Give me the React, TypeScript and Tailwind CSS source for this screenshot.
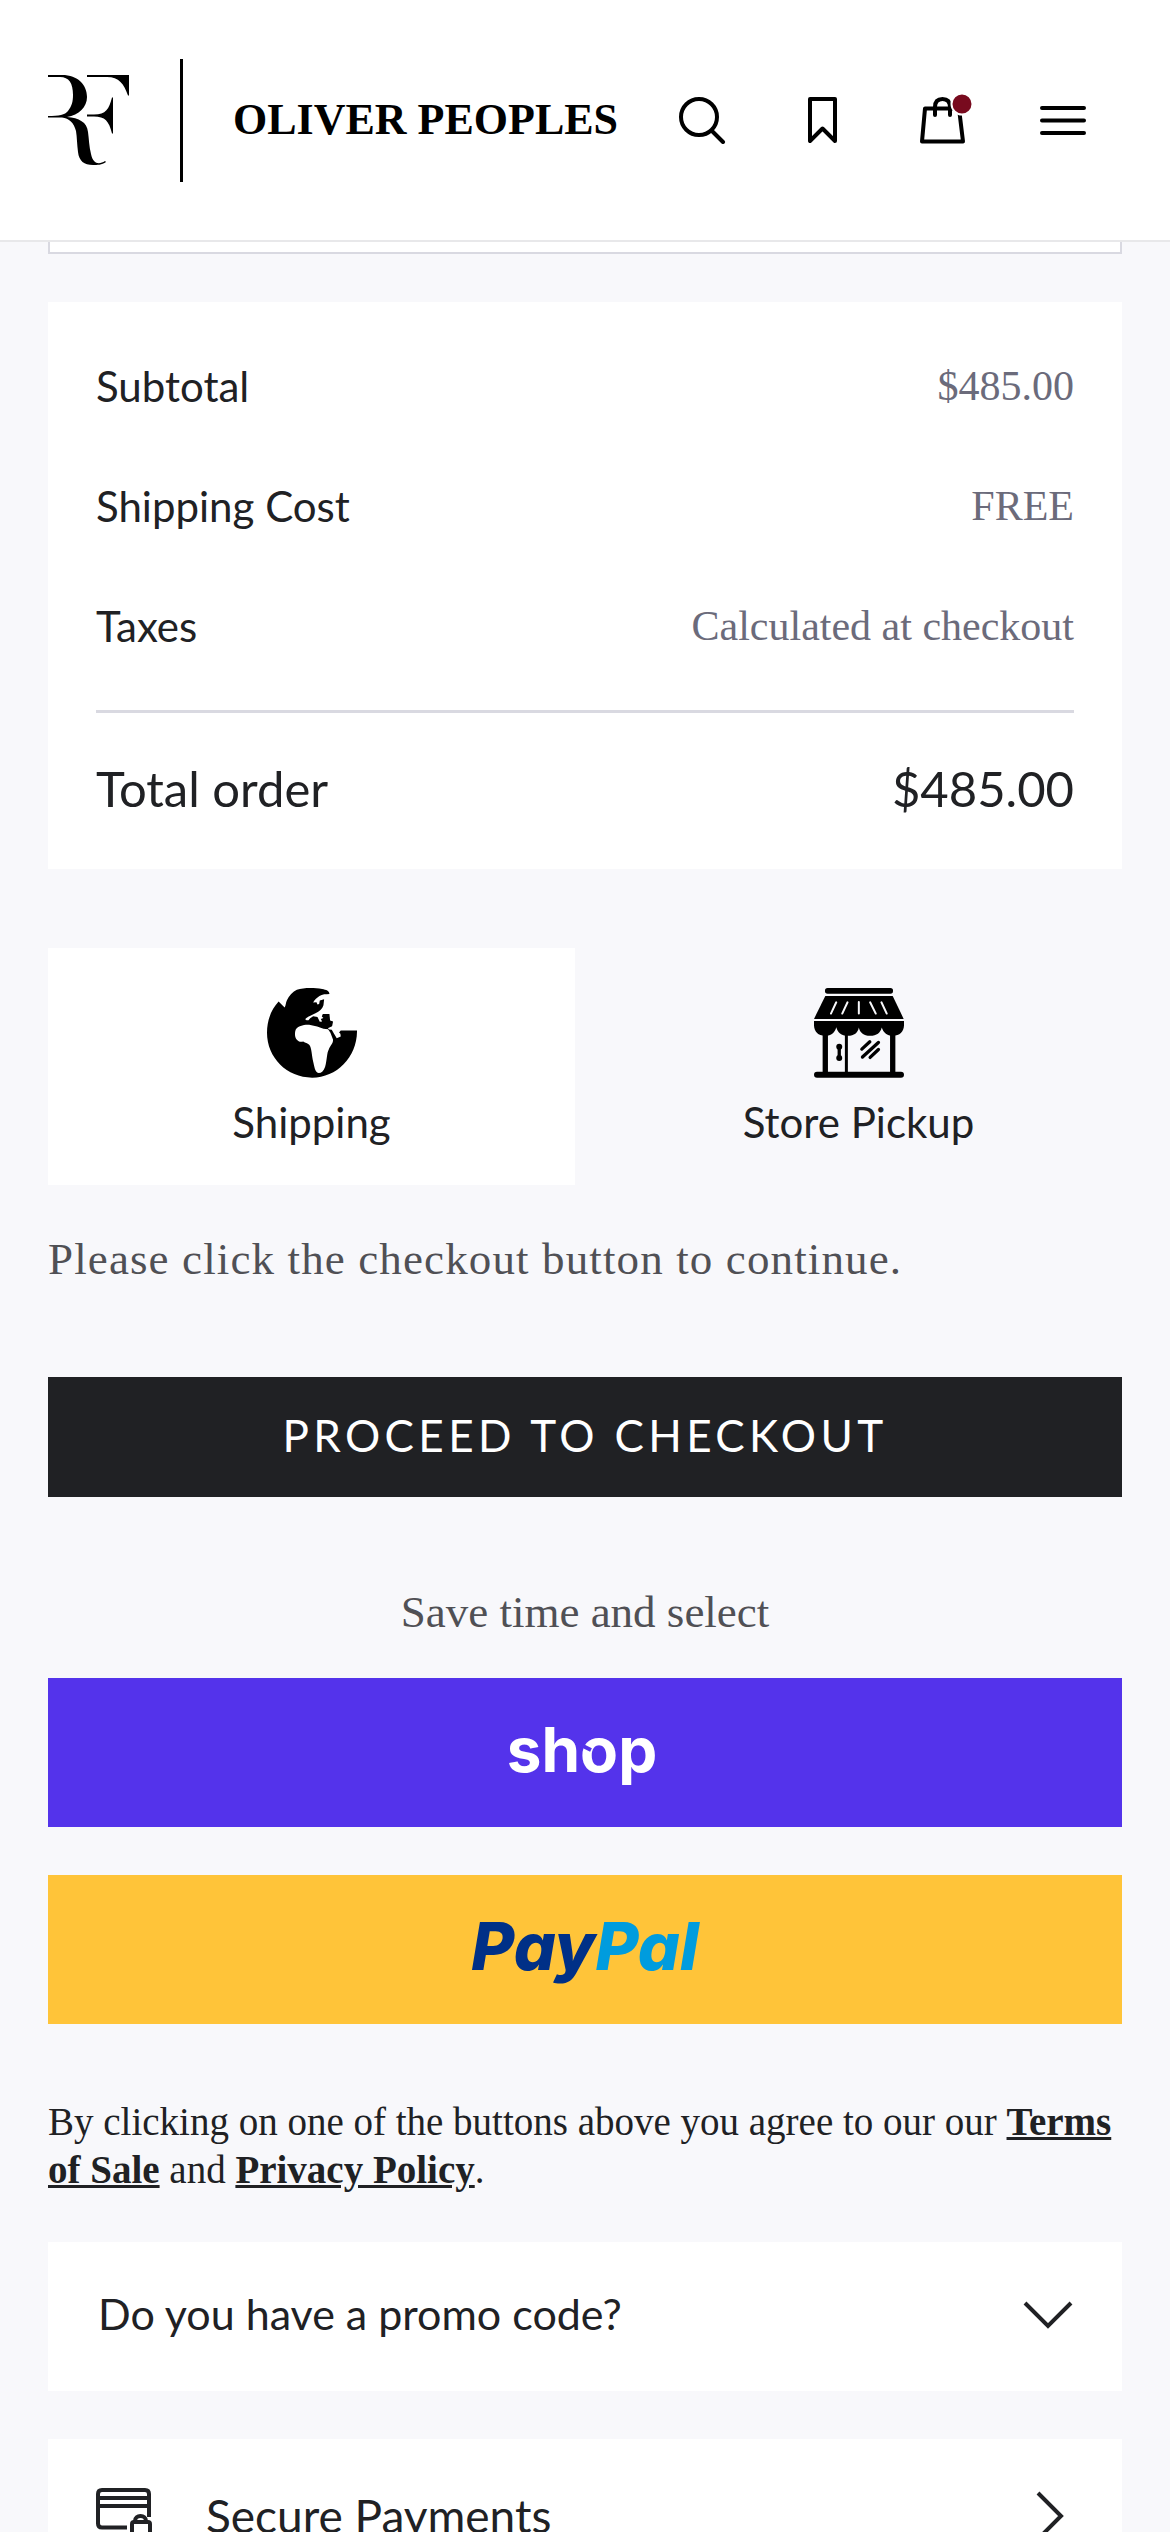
import { useState } from "react";
import type { ReactNode } from "react";

const summary = [
  { label: "Subtotal", value: "$485.00" },
  { label: "Shipping Cost", value: "FREE" },
  { label: "Taxes", value: "Calculated at checkout" },
];

function Monogram() {
  return (
    <svg className="w-[82px] h-[90px]" viewBox="0 0 82 90" aria-hidden="true">
      <path d="M0 0H14C30 0 39 10 39 22C39 32 31 40 19 42C31 43 39 47 40 57C41 64 41 71 43 79C45 89 51 90 57 86L58 87C54 90 49 90 45 90C36 90 31 86 30 77C29 70 29 62 28 56C26 48 21 43 14 42.5H0V41C11 41 17 40 20 36C24 31 25 26 25 20C25 8 21 2 12 2H0Z" />
      <path d="M39 0H81V20.5H80C76 9 71 2 59 2H39Z" />
      <path d="M39 39.5H46C58 39.500 61 34 64 22.500H65V58.500H64C61 46 57 41.500 46 41.500H39Z" />
    </svg>
  );
}

function SearchIcon() {
  return (
    <svg className="size-12" viewBox="0 0 48 48" fill="none" stroke="black" strokeWidth="4" strokeLinecap="round" aria-hidden="true">
      <circle cx="21" cy="21" r="18" />
      <path d="M34 35L45 46" />
    </svg>
  );
}

function BookmarkIcon() {
  return (
    <svg className="size-12" viewBox="0 0 48 48" fill="none" stroke="black" strokeWidth="4" strokeLinejoin="round" aria-hidden="true">
      <path d="M12 3H37V45L24.500 32.500L12 45Z" />
    </svg>
  );
}

function BagIcon() {
  return (
    <svg className="size-12 overflow-visible" viewBox="0 0 48 48" fill="none" stroke="black" strokeWidth="4" strokeLinejoin="round" strokeLinecap="round" aria-hidden="true">
      <path d="M7 12.500H41L45 45.500H4Z" />
      <path d="M17 19V11C17 5.500 20 3 24.500 3C29 3 32 5.500 32 11V19" />
      <circle cx="44" cy="8" r="10.500" fill="#780a1e" stroke="white" strokeWidth="2" />
    </svg>
  );
}

function MenuIcon() {
  return (
    <svg className="size-12" viewBox="0 0 48 48" fill="none" stroke="black" strokeWidth="4" strokeLinecap="round" aria-hidden="true">
      <path d="M4 12H46M4 24.500H46M4 37H46" />
    </svg>
  );
}

function GlobeIcon() {
  return (
    <svg className="size-[90px]" viewBox="80 86 271 271" aria-hidden="true">
      <path d="M115 127L133 145C137 140 136 131 140 123C146 108 158 97 170 91C190 85 222 85 246 89C258 91 268 95 268 104C258 105 246 104 238 110C230 116 222 122 219 130L229 129L232 136L237 134L239 124L252 120L250 138C246 150 238 156 226 162C213 169 201 172 195 180L199 183L205 183L210 177L219 171L232 173L239 188L246 187L242 179L250 176L245 172L248 164L268 164L270 184L279 187L276 201L263 207L268 211L275 212L281 222L290 237L302 232L301 224L297 220L302 214H351C352 293 291 356 216 356C140 356 80 296 80 221C80 180 95 148 115 127Z" />
      <path fill="white" d="M167 210C174 201 190 196 207 197L231 202L250 209L264 210L271 221L279 242C279 254 272 257 266 271C260 281 261 302 255 323C251 335 244 342 236 342C226 341 224 330 220 312C214 288 215 266 207 257C202 251 196 252 189 247C181 250 174 247 170 242C163 234 163 219 167 210Z" />
    </svg>
  );
}

function StoreIcon() {
  return (
    <svg className="size-[90px]" viewBox="71 86 271 271" aria-hidden="true">
      <rect x="104" y="86" width="205" height="17" rx="8" />
      <path d="M105 110H308L341 179H71Z" />
      <path d="M71 185H342V199C341 218 329 230 309 230C290 230 280 220 275 205C271 221 260 230 240 230C220 230 209 220 206 205C203 221 192 230 173 230C153 230 142 219 138 204C134 220 124 230 104 230C84 230 72 218 71 199Z" />
      <path d="M97 225H113V342H97ZM164 225H173V342H164ZM300 225H316V342H300Z" />
      <rect x="71" y="338" width="271" height="18" rx="9" />
      <path d="M138 129L122 163M172 129L156 163M206 128V163M240 129L257 163M274 129L290 163" stroke="#f8f8fb" strokeWidth="6" strokeLinecap="round" />
      <path d="M147 262V297" stroke="black" strokeWidth="10" />
      <circle cx="147" cy="263" r="9" />
      <circle cx="147" cy="297" r="9" />
      <path d="M215 270L239 248M217 294L265 250M240 295L265 271" stroke="black" strokeWidth="10" strokeLinecap="round" />
    </svg>
  );
}

function CardLockIcon() {
  return (
    <svg className="size-14" viewBox="0 0 56 56" fill="none" stroke="#202124" strokeWidth="4" aria-hidden="true">
      <path d="M31 39.500H6C3.500 39.500 2 38 2 35.500V6C2 3.500 3.500 2 6 2H49C51.500 2 53 3.500 53 6V29M2 10H53M2 18H53" />
      <rect x="36" y="34" width="18" height="16" rx="2" />
      <path d="M39 34V33C39 29.500 41.500 28 44.500 28C47.500 28 50 29.500 50 33V34" />
    </svg>
  );
}

function ShopLogo() {
  return (
    <svg className="w-[160px] h-[100px]" viewBox="0 0 160 100" role="img" aria-label="shop">
      <text x="77" y="69" textAnchor="middle" fill="white" className="font-['Inter',sans-serif] font-bold text-[62px]">
        shop
      </text>
      <path d="M72 40L86 47" stroke="#5433eb" strokeWidth="4" />
    </svg>
  );
}

function HeaderButton({ label, children }: { label: string; children: ReactNode }) {
  return (
    <button type="button" aria-label={label} className="w-[120px] h-[120px] flex items-center justify-center">
      {children}
    </button>
  );
}

export default function App() {
  const [method, setMethod] = useState("shipping");

  const tab = "flex-1 h-[237px] flex flex-col items-center pt-10 text-[42px] leading-[60px]";

  return (
    <div className="h-screen overflow-hidden bg-[#f8f8fb] font-['Lato',sans-serif] text-[#202124]">
      <header className="h-[242px] px-12 flex items-center bg-white border-b-2 border-[#e8e8ea]">
        <a href="#" aria-label="Home" className="shrink-0">
          <Monogram />
        </a>
        <div className="w-[3px] h-[123px] bg-black ml-[50px] mr-[50px]" />
        <a href="#" className="font-['Liberation_Serif',serif] font-bold text-[44px] leading-none text-black whitespace-nowrap">
          OLIVER PEOPLES
        </a>
        <nav className="ml-auto flex">
          <HeaderButton label="Search"><SearchIcon /></HeaderButton>
          <HeaderButton label="Wishlist"><BookmarkIcon /></HeaderButton>
          <HeaderButton label="Cart"><BagIcon /></HeaderButton>
          <HeaderButton label="Menu"><MenuIcon /></HeaderButton>
        </nav>
      </header>

      <main className="px-12">
        <div className="h-3 bg-white border-2 border-t-0 border-[#d9d9e1]" />

        <section className="mt-12 px-12 pt-6 bg-white">
          <dl>
            {summary.map(row => (
              <div key={row.label} className="h-[120px] flex items-center justify-between">
                <dt className="text-[42px]">{row.label}</dt>
                <dd className="font-['Liberation_Serif',serif] text-[42px] text-[#6b6b7b]">{row.value}</dd>
              </div>
            ))}
            <div className="mt-6 h-[159px] pb-1 flex items-center justify-between border-t-3 border-[#d9d9e1] text-[49px]">
              <dt>Total order</dt>
              <dd>$485.00</dd>
            </div>
          </dl>
        </section>

        <div className="mt-[79px] flex gap-5" role="group" aria-label="Delivery method">
          <button type="button" onClick={() => setMethod("shipping")} className={`${tab} ${method === "shipping" ? "bg-white" : ""}`}>
            <GlobeIcon />
            <span className="mt-3.5">Shipping</span>
          </button>
          <button type="button" onClick={() => setMethod("pickup")} className={`${tab} ${method === "pickup" ? "bg-white" : ""}`}>
            <StoreIcon />
            <span className="mt-3.5">Store Pickup</span>
          </button>
        </div>

        <p className="mt-11 font-['Liberation_Serif',serif] text-[45px] leading-[60px] tracking-wide text-[#505055]">
          Please click the checkout button to continue.
        </p>

        <button type="button" className="mt-[88px] w-full h-[120px] pb-1 bg-[#202124] text-white text-[44px] tracking-widest">
          PROCEED TO CHECKOUT
        </button>

        <p className="mt-[85px] text-center font-['Liberation_Serif',serif] text-[45px] leading-[60px] text-[#505055]">
          Save time and select
        </p>
        <button type="button" className="mt-9 w-full h-[149px] bg-[#5433eb] flex items-center justify-center">
          <ShopLogo />
        </button>
        <button type="button" aria-label="PayPal" className="mt-12 pb-2 w-full h-[149px] bg-[#ffc439] font-['Inter',sans-serif] font-extrabold italic text-[66px] leading-none">
          <span className="text-[#003087]">Pay</span>
          <span className="text-[#009cde]">Pal</span>
        </button>

        <p className="mt-[74px] font-['Liberation_Serif',serif] text-[39px] leading-[48px]">
          By clicking on one of the buttons above you agree to our our{" "}
          <a href="#" className="font-bold underline">Terms of Sale</a> and{" "}
          <a href="#" className="font-bold underline">Privacy Policy</a>.
        </p>

        <button type="button" className="mt-12 w-full h-[149px] pl-[50px] pr-12 pb-1 flex items-center justify-between bg-white text-[43px]">
          Do you have a promo code?
          <svg className="w-[52px] h-8" viewBox="0 0 52 32" fill="none" stroke="#202124" strokeWidth="4" aria-hidden="true">
            <path d="M3 4L26 27L49 4" />
          </svg>
        </button>

        <button type="button" className="mt-12 w-full h-[153px] px-12 flex items-center bg-white text-[46px]">
          <CardLockIcon />
          <span className="ml-[54px]">Secure Payments</span>
          <svg className="ml-auto mr-2 w-8 h-[52px]" viewBox="0 0 32 52" fill="none" stroke="#202124" strokeWidth="4" aria-hidden="true">
            <path d="M4 3L27 26L4 49" />
          </svg>
        </button>
      </main>
    </div>
  );
}
